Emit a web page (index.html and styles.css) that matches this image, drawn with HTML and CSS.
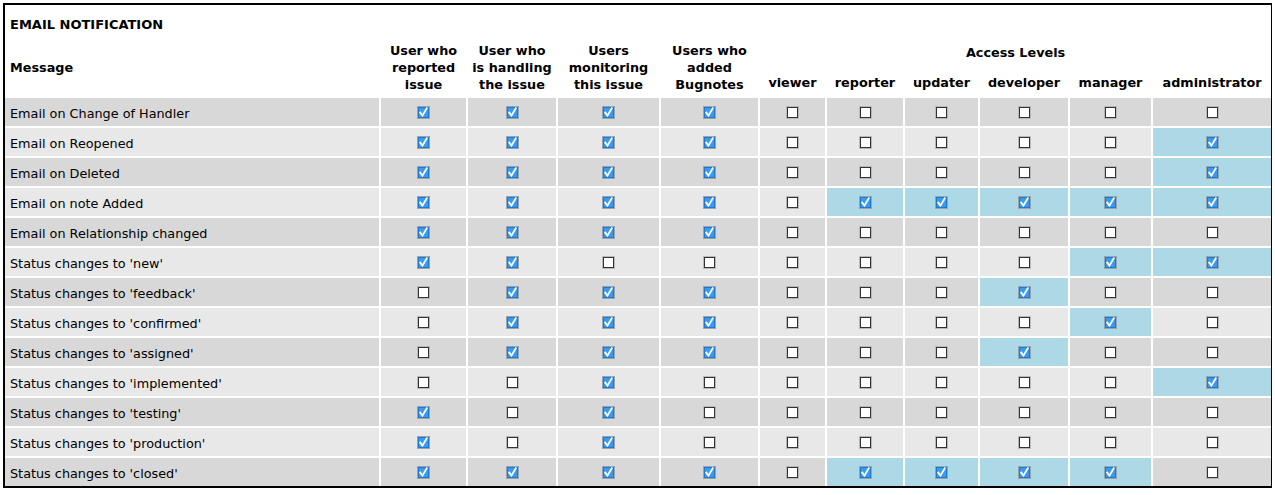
FILE: index.html
```html
<!DOCTYPE html>
<html>
<head>
<meta charset="utf-8">
<title>Email Notification</title>
<link rel="stylesheet" href="styles.css">
</head>
<body>
<svg class="defs" width="0" height="0" aria-hidden="true">
  <defs>
    <symbol id="cb-on" viewBox="0 0 13 13">
      <rect x="0" y="0" width="13" height="13" fill="#9aa4ad"/>
      <rect x="1" y="1" width="11" height="11" fill="#2078cc"/>
      <rect x="2" y="2" width="9" height="9" fill="#3a9aec"/>
      <path d="M3.2 6.6 L5.4 9.6 L9.8 2.2" fill="none" stroke="#fff" stroke-width="1.8" stroke-linecap="square"/>
    </symbol>
    <symbol id="cb-off" viewBox="0 0 13 13">
      <rect x="0" y="0" width="13" height="13" fill="#b8b8b8"/>
      <rect x="1" y="1" width="11" height="11" fill="#333"/>
      <rect x="2" y="2" width="9" height="9" fill="#fff"/>
    </symbol>
  </defs>
</svg>
<div class="frame">
<table class="grid">
  <colgroup>
    <col class="w-msg"><col class="w-c1"><col class="w-c2"><col class="w-c3"><col class="w-c4">
    <col class="w-viewer"><col class="w-reporter"><col class="w-updater"><col class="w-developer"><col class="w-manager"><col class="w-admin">
  </colgroup>
  <thead>
    <tr class="title"><td colspan="11">EMAIL NOTIFICATION</td></tr>
    <tr class="head1">
      <th rowspan="2" class="msg">Message</th>
      <th rowspan="2">User who<br>reported<br>issue</th>
      <th rowspan="2">User who<br>is handling<br>the issue</th>
      <th rowspan="2">Users<br>monitoring<br>this issue</th>
      <th rowspan="2">Users who<br>added<br>Bugnotes</th>
      <th colspan="6">Access Levels</th>
    </tr>
    <tr class="head2">
      <th>viewer</th><th>reporter</th><th>updater</th><th>developer</th><th>manager</th><th>administrator</th>
    </tr>
  </thead>
  <tbody id="rows"></tbody>
</table>
</div>
<script src="app.js"></script>
</body>
</html>
```

FILE: app.js
```js
var data = [
  ["Email on Change of Handler",        "1111", "000000"],
  ["Email on Reopened",                 "1111", "000001"],
  ["Email on Deleted",                  "1111", "000001"],
  ["Email on note Added",               "1111", "011111"],
  ["Email on Relationship changed",     "1111", "000000"],
  ["Status changes to 'new'",           "1100", "000011"],
  ["Status changes to 'feedback'",      "0111", "000100"],
  ["Status changes to 'confirmed'",     "0111", "000010"],
  ["Status changes to 'assigned'",      "0111", "000100"],
  ["Status changes to 'implemented'",   "0010", "000001"],
  ["Status changes to 'testing'",       "1010", "000000"],
  ["Status changes to 'production'",    "1010", "000000"],
  ["Status changes to 'closed'",        "1111", "011110"]
];
function box(on) {
  return '<svg class="cb" width="13" height="13"><use href="#' + (on ? 'cb-on' : 'cb-off') + '"/></svg>';
}
var html = "";
data.forEach(function (r, i) {
  html += '<tr class="' + (i % 2 === 0 ? 'dark' : 'light') + '">';
  html += '<td class="msg">' + r[0] + '</td>';
  for (var a = 0; a < 4; a++) html += '<td class="chk">' + box(r[1][a] === "1") + '</td>';
  for (var b = 0; b < 6; b++) {
    var on = r[2][b] === "1";
    html += '<td class="chk' + (on ? ' hl' : '') + '">' + box(on) + '</td>';
  }
  html += '</tr>';
});
document.getElementById("rows").innerHTML = html;
```

FILE: styles.css
```css
html, body { background: #fff; }
body {
  margin: 3px;
  font-family: "DejaVu Sans", Verdana, sans-serif;
  font-size: 12.8px;
  color: #000;
}
.defs { position: absolute; width: 0; height: 0; overflow: hidden; }
.frame {
  width: 1270px;
  box-sizing: border-box;
  border: 2px solid #000;
}
.grid {
  margin: -2px;
  width: 1270px;
  table-layout: fixed;
  border-collapse: separate;
  border-spacing: 2px;
}
.w-msg { width: 374px; }
.w-c1 { width: 85px; }
.w-c2 { width: 88px; }
.w-c3 { width: 101px; }
.w-c4 { width: 97px; }
.w-viewer { width: 65px; }
.w-reporter { width: 76px; }
.w-updater { width: 73px; }
.w-developer { width: 88px; }
.w-manager { width: 81px; }
.w-admin { width: 118px; }

.grid td, .grid th { padding: 0; }
.title td {
  height: 32px;
  box-sizing: border-box;
  padding: 10px 0 4px 5px;
  font-size: 13px;
  font-weight: bold;
  line-height: 17px;
  vertical-align: middle;
}
.grid th {
  font-weight: bold;
  line-height: 17px;
  text-align: center;
  vertical-align: middle;
}
.grid th.msg { text-align: left; padding-left: 5px; }
.head1 th { height: 27px; }
.head2 th { height: 28px; }

tbody tr td { height: 28px; }
tbody td.msg { padding: 2px 0 0 5px; box-sizing: border-box; vertical-align: middle; }
tr.dark td { background: #d8d8d8; }
tr.light td { background: #e8e8e8; }
tr td.hl { background: #add8e6; }
td.chk { text-align: center; vertical-align: middle; line-height: 0; }
.cb { display: inline-block; vertical-align: middle; }
```
